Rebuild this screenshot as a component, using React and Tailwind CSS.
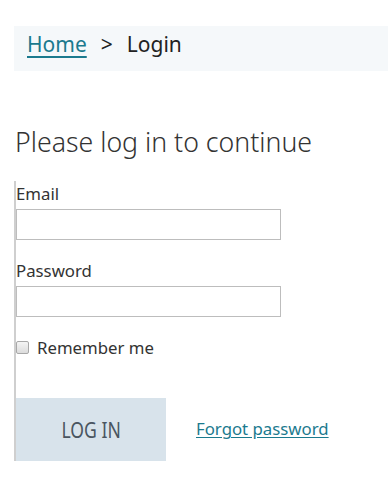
import React from 'react';

const App = () => {
  return (
    <div className="w-[388px] h-[498px] bg-white text-[#333] overflow-hidden" style={{ fontFamily: '"Noto Sans", "Open Sans", sans-serif' }}>
      {/* Breadcrumb */}
      <div className="ml-[14px] mt-[26px] h-[45px] bg-[#f5f8fa] pl-[13px] pt-[3px] flex items-start text-[21px] leading-[30px] text-[#222]">
        <a href="#" className="text-[#1b7a8e] underline underline-offset-4 decoration-[1.5px]">Home</a>
        <span className="mx-[14px]">&gt;</span>
        <span>Login</span>
      </div>

      <h1 className="ml-[15px] mt-[54px] text-[26.7px] font-light text-[#333] leading-tight">Please log in to continue</h1>

      {/* Form */}
      <form className="ml-[14px] mt-[23px] border-l-2 border-[#cfcfcf] w-[360px]">
        <label className="block text-[16.8px] leading-[20px] pt-[3px] text-[#333]">Email</label>
        <input type="text" className="block mt-[5px] w-[265px] h-[31px] border border-[#bdbdbd] bg-white" />

        <label className="block mt-[21px] text-[16.8px] leading-[20px] text-[#333]">Password</label>
        <input type="password" className="block mt-[5px] w-[265px] h-[31px] border border-[#bdbdbd] bg-white" />

        <label className="flex items-center mt-[18px] text-[16.8px] text-[#333]">
          <span className="w-[13px] h-[13px] border border-[#a8a8a8] rounded-[2px] bg-gradient-to-b from-[#f4f4f4] to-[#dcdcdc] mr-[8px]" />
          Remember me
        </label>

        <div className="flex items-center mt-[37px]">
          <button type="button" className="shrink-0 w-[150px] h-[63px] bg-[#d8e3eb] text-[#4a5560] text-[22px]">
            <span className="inline-block scale-x-[0.8]">LOG IN</span>
          </button>
          <a href="#" className="ml-[30px] whitespace-nowrap text-[16.8px] text-[#1b7a8e] underline underline-offset-2">Forgot password</a>
        </div>
      </form>
    </div>
  );
};

export default App;
